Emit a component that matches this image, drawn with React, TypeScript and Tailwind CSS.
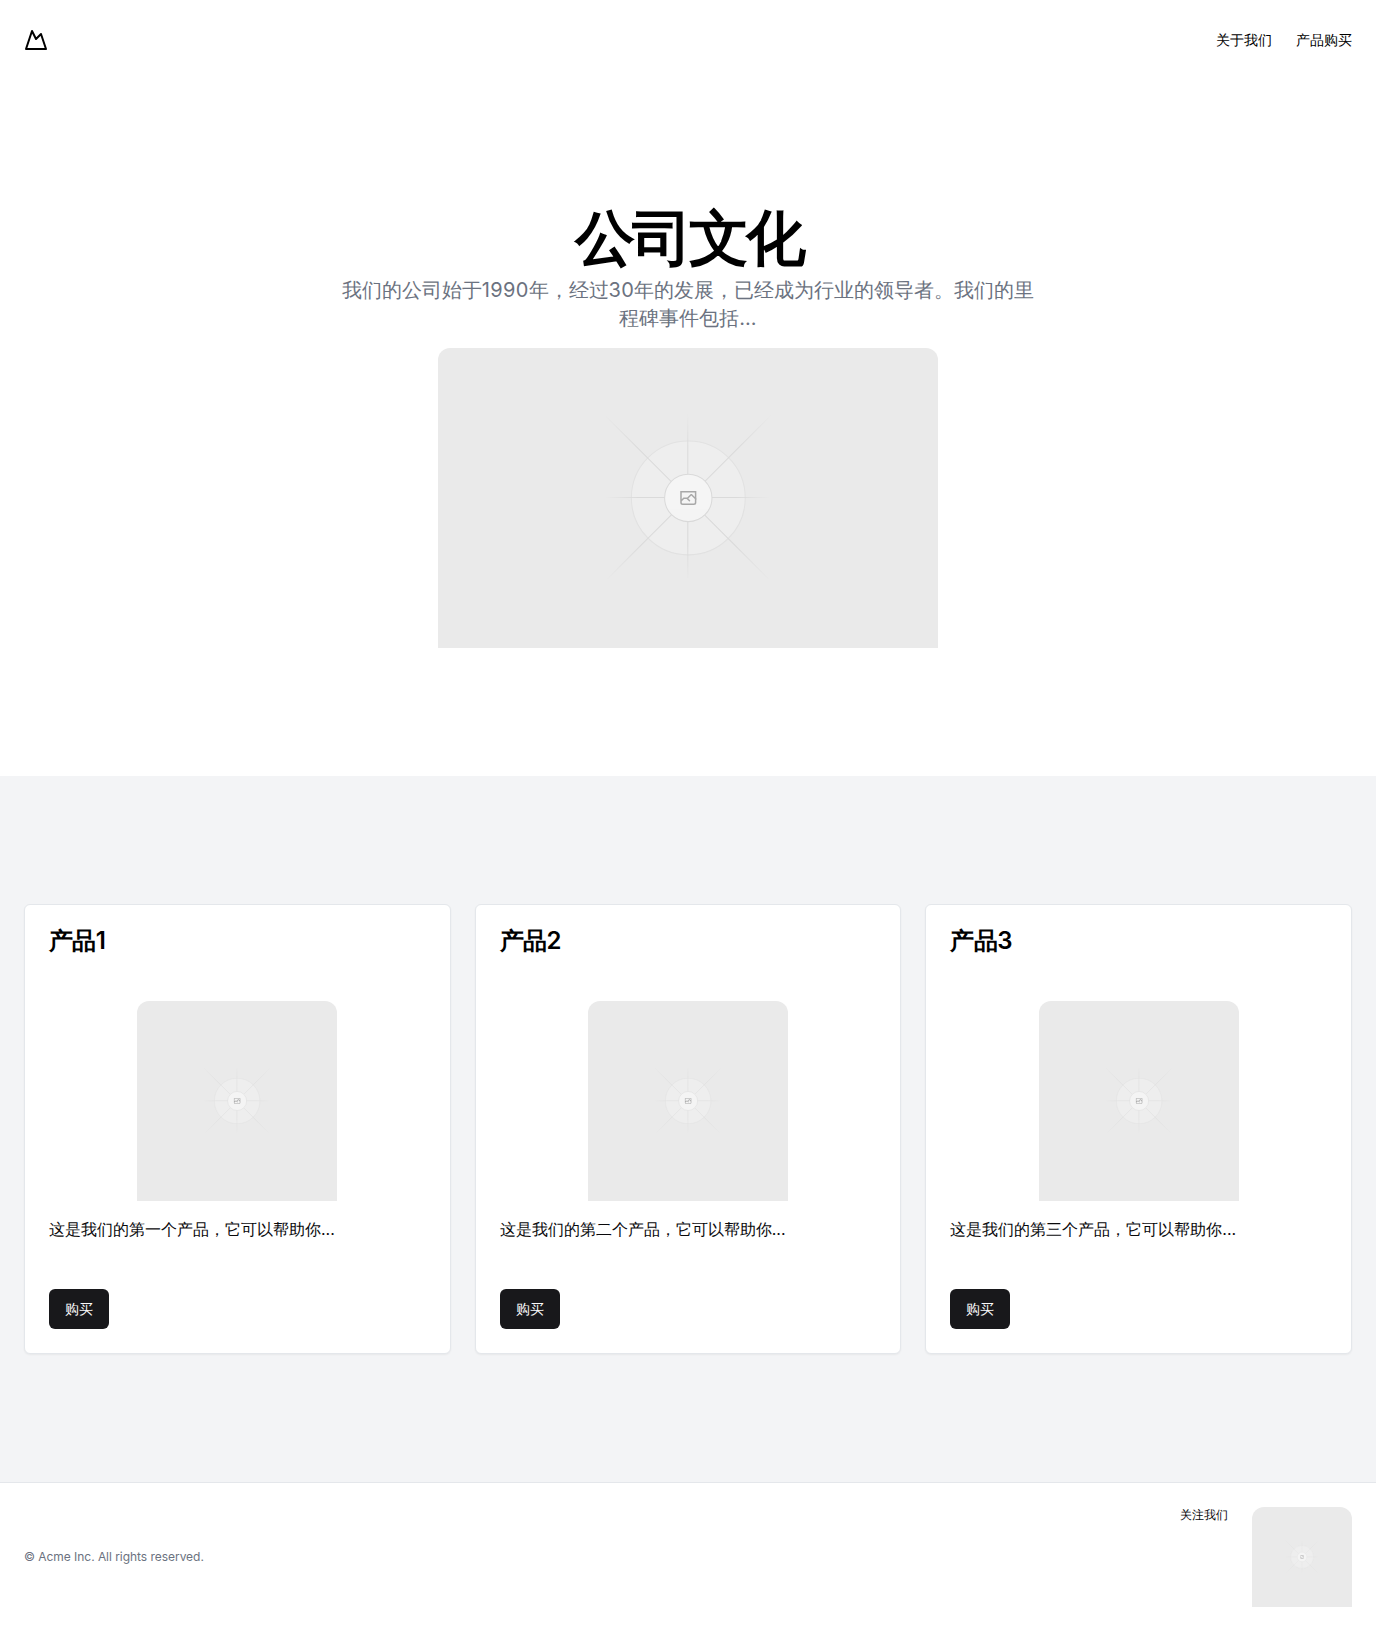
import { useId } from "react";

function MountainIcon() {
  return (
    <svg
      className="h-6 w-6"
      viewBox="0 0 24 24"
      fill="none"
      stroke="currentColor"
      strokeWidth="2"
      strokeLinecap="round"
      strokeLinejoin="round"
    >
      <path d="m8 3 4 8 5-5 5 15H2L8 3z" />
    </svg>
  );
}

function Placeholder({ className }: { className: string }) {
  const id = useId();
  const lines = [
    [404.5, 796.2, 802, 398.7],
    [398, 598.671, 796.572, 598.671],
    [599.5, 795.742, 599.5, 394],
    [795.717, 796.597, 396.12, 397],
  ];
  return (
    <svg
      className={className}
      viewBox="0 0 1200 1200"
      preserveAspectRatio="xMidYMid slice"
      fill="none"
    >
      <defs>
        {lines.map(([x1, y1, x2, y2], i) => (
          <linearGradient
            key={i}
            id={`${id}-${i}`}
            x1={x1}
            y1={y1}
            x2={x2}
            y2={y2}
            gradientUnits="userSpaceOnUse"
          >
            <stop stopColor="#C9C9C9" stopOpacity="0" />
            <stop offset=".208" stopColor="#C9C9C9" />
            <stop offset=".792" stopColor="#C9C9C9" />
            <stop offset="1" stopColor="#C9C9C9" stopOpacity="0" />
          </linearGradient>
        ))}
      </defs>
      <rect width="1200" height="1200" fill="#EAEAEA" />
      <g opacity=".5">
        <g opacity=".5">
          <circle cx="600.709" cy="599.88" r="136.62" fill="#FAFAFA" />
          <circle cx="600.709" cy="599.88" r="136.62" stroke="#C9C9C9" strokeWidth="2.418" />
        </g>
        {lines.map(([x1, y1, x2, y2], i) => (
          <path
            key={i}
            d={`M${x1} ${y1}L${x2} ${y2}`}
            stroke={`url(#${id}-${i})`}
            strokeWidth="2.418"
          />
        ))}
        <circle cx="600.709" cy="599.88" r="56.825" fill="#fff" />
        <path
          fill="#666"
          fillRule="evenodd"
          clipRule="evenodd"
          d="M616.426 586.58h-31.434v16.176l3.553-3.554.531-.531h9.068l.074-.074 8.463-8.463h2.565l7.18 7.181V586.58Zm-15.715 14.654 3.698 3.699 1.283 1.282-2.565 2.565-1.282-1.283-5.2-5.199h-6.066l-5.514 5.514-.073.073v2.876a2.418 2.418 0 0 0 2.418 2.418h26.598a2.418 2.418 0 0 0 2.418-2.418v-8.317l-8.463-8.463-7.181 7.181-.071.072Zm-19.347 5.442v4.085a6.045 6.045 0 0 0 6.046 6.045h26.598a6.044 6.044 0 0 0 6.045-6.045v-7.108l1.356-1.355-1.282-1.283-.074-.073v-17.989h-38.689v23.43l-.146.146.146.147Z"
        />
        <circle cx="600.709" cy="599.88" r="56.825" stroke="#C9C9C9" strokeWidth="2.418" />
      </g>
    </svg>
  );
}

const products = [
  { title: "产品1", text: "这是我们的第一个产品，它可以帮助你..." },
  { title: "产品2", text: "这是我们的第二个产品，它可以帮助你..." },
  { title: "产品3", text: "这是我们的第三个产品，它可以帮助你..." },
];

export default function App() {
  return (
    <div className="flex min-h-screen flex-col bg-white font-[Inter,sans-serif] text-[#09090b]">
      <header className="flex h-20 items-center px-6 text-black">
        <a href="#">
          <MountainIcon />
        </a>
        <nav className="ml-auto flex gap-6 text-sm">
          <a href="#">关于我们</a>
          <a href="#">产品购买</a>
        </nav>
      </header>
      <main>
        <section className="flex flex-col items-center px-6 py-32 text-center">
          <h1 className="translate-x-px -translate-y-px text-6xl leading-none font-bold tracking-tighter text-black">
            公司文化
          </h1>
          <p className="mt-2 max-w-[700px] text-xl text-[#6b7280]">
            我们的公司始于<span className="tracking-[0.3px]">1990</span>年，经过
            <span className="tracking-[0.3px]">30</span>
            年的发展，已经成为行业的领导者。我们的里程碑事件包括...
          </p>
          <Placeholder className="mt-4 h-[300px] w-[500px] rounded-t-xl" />
        </section>
        <section className="grid grid-cols-3 gap-6 bg-[#f3f4f6] px-6 py-32">
          {products.map((p) => (
            <article key={p.title} className="rounded-md border border-[#e4e7eb] bg-white shadow-xs">
              <div className="p-6">
                <h3 className="text-2xl leading-none font-semibold tracking-tight text-black">{p.title}</h3>
              </div>
              <div className="p-6">
                <Placeholder className="mx-auto size-[200px] rounded-t-xl" />
                <p className="mt-4 text-base">{p.text}</p>
              </div>
              <div className="flex p-6">
                <button className="h-10 rounded-md bg-[#18181b] px-4 text-sm text-[#fafafa]">购买</button>
              </div>
            </article>
          ))}
        </section>
      </main>
      <footer className="flex items-center border-t border-[#e4e7eb] p-6 text-xs">
        <p className="tracking-[-0.04px] text-[#6b7280]">© Acme Inc. All rights reserved.</p>
        <div className="ml-auto flex gap-6">
          <a href="#">关注我们</a>
          <Placeholder className="size-[100px] rounded-t-xl" />
        </div>
      </footer>
    </div>
  );
}
